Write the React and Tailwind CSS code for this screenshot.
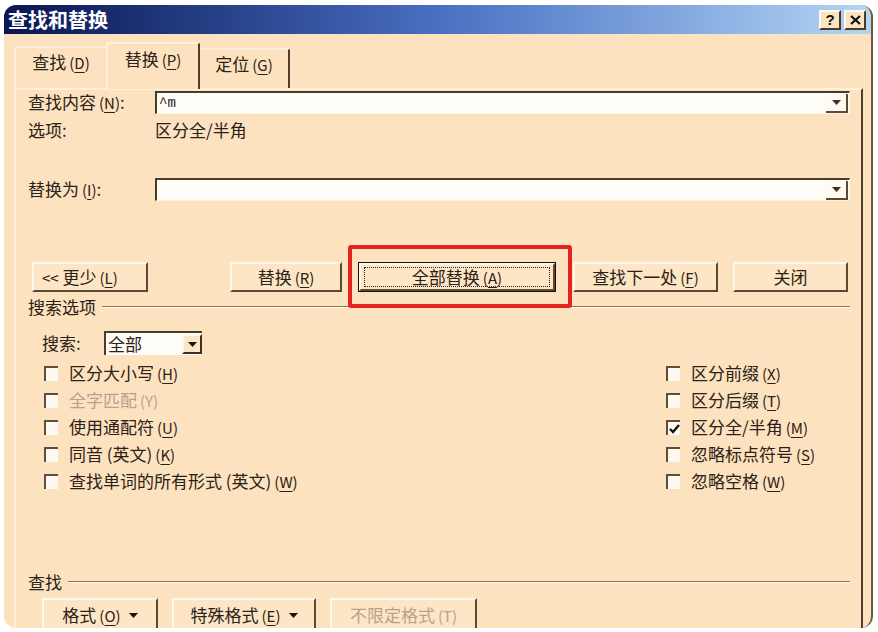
import React from "react";

const ink = "text-[#2b2116]";

function Key({ children }) {
    return <span className="underline underline-offset-[3px] decoration-1">{children}</span>;
}

// mnemonic suffix, e.g. " (N)"
function Mn({ k, plain = false }) {
    return (
        <span className="ml-[3px] text-[15px]">
            ({plain ? k : <Key>{k}</Key>})
        </span>
    );
}

function Btn({ className = "", children }) {
    return (
        <div className={`flex items-center justify-center bg-[#fde6c6] border-2 border-t-[#fff8ec] border-l-[#fff8ec] border-r-[#5b4930] border-b-[#5b4930] ${className}`}>
            {children}
        </div>
    );
}

function DropArrow({ dark = false }) {
    return (
        <svg width="9" height="5" viewBox="0 0 9 5">
            <path d="M0 0 H9 L4.5 5 Z" fill={dark ? "#1a140d" : "#3a2f22"} />
        </svg>
    );
}

function Field({ value }) {
    return (
        <div className="flex-1 h-[23px] flex items-center bg-[#fffdf8] border-t-2 border-l-2 border-b border-r border-t-[#4a3c2a] border-l-[#4a3c2a] border-b-[#fff3e0] border-r-[#fff3e0]">
            <span className="flex-1 pl-[2px] text-[14px] leading-none text-[#1e1810] font-['Liberation_Mono',monospace]">{value}</span>
            <div className="w-[22px] h-[19px] mr-[1px] flex items-center justify-center border-r-2 border-b-2 border-r-[#5b4930] border-b-[#5b4930] bg-[#fffaf2]">
                <DropArrow />
            </div>
        </div>
    );
}

function Check({ checked = false, children, disabled = false }) {
    return (
        <div className="h-[27px] flex items-center">
            <span className="w-[14px] h-[15px] flex items-center justify-center bg-[#fffaf1] border-t-2 border-l-2 border-t-[#5e4f3c] border-l-[#5e4f3c]">
                {checked && (
                    <svg width="11" height="10" viewBox="0 0 11 10">
                        <path d="M1 5 L4 8 L10 1" stroke="#14100a" strokeWidth="2.4" fill="none" />
                    </svg>
                )}
            </span>
            <span className={`ml-[11px] whitespace-nowrap ${disabled ? "text-[#b3a38d]" : ""}`}>{children}</span>
        </div>
    );
}

function Legend({ title }) {
    return (
        <div className="h-[20px] flex items-center">
            <span className="whitespace-nowrap">{title}</span>
            <div className="flex-1 ml-[6px] border-t border-b border-t-[#8b7658] border-b-[#fff6e8]"></div>
        </div>
    );
}

export default function App() {
    return (
        <div className={`w-[878px] h-[632px] bg-white pt-[5px] pl-[4px] pr-[5px] pb-[4px] ${ink} font-['Noto_Sans_CJK_SC',sans-serif] text-[17px] leading-[20px]`}>
            <div className="h-full flex flex-col rounded-[12px] overflow-hidden bg-[#fde2bf] border-r-2 border-r-[#6b5a42]">
                {/* title bar */}
                <div className="h-[29px] shrink-0 flex items-center pl-[4px] pr-[5px] bg-gradient-to-r from-[#0a1652] via-[#4a6fc2] to-[#b4d6f4]">
                    <span className="text-white font-bold text-[20px]">查找和替换</span>
                    <div className="ml-auto flex gap-[3px]">
                        <div className="w-[22px] h-[20px] flex items-center justify-center bg-[#fbe3c4] border-2 border-t-[#fff8ec] border-l-[#fff8ec] border-r-[#4a3a26] border-b-[#4a3a26] font-bold text-[15px] text-[#111] font-['Liberation_Sans',sans-serif]">?</div>
                        <div className="w-[22px] h-[20px] flex items-center justify-center bg-[#fbe3c4] border-2 border-t-[#fff8ec] border-l-[#fff8ec] border-r-[#4a3a26] border-b-[#4a3a26]">
                            <svg width="11" height="10" viewBox="0 0 11 10">
                                <path d="M1 1 L10 9 M10 1 L1 9" stroke="#111" strokeWidth="2.2" />
                            </svg>
                        </div>
                    </div>
                </div>

                {/* tabs */}
                <div className="h-[54px] shrink-0 flex items-end pl-[10px]">
                    <div className="w-[92px] h-[42px] pt-[4px] flex justify-center border-t-2 border-l-2 border-t-[#fff0dc] border-l-[#fff0dc] rounded-tl-[3px]">
                        <span>查找<Mn k="D" /></span>
                    </div>
                    <div className="w-[94px] h-[47px] -mb-[1px] pt-[5px] flex justify-center bg-[#fde2bf] border-t-2 border-l-2 border-r-2 border-t-[#fff0dc] border-l-[#fff0dc] border-r-[#4f3f29] rounded-t-[3px] relative z-10">
                        <span>替换<Mn k="P" /></span>
                    </div>
                    <div className="w-[90px] h-[40px] pt-[4px] flex justify-center border-t-2 border-r-2 border-t-[#fff0dc] border-r-[#4f3f29] rounded-tr-[3px]">
                        <span>定位<Mn k="G" /></span>
                    </div>
                </div>

                {/* panel */}
                <div className="flex-1 ml-[10px] mr-[8px] border-t-2 border-l-2 border-r-2 border-t-[#fff0dc] border-l-[#fff0dc] border-r-[#4f3f29] pl-[12px] pr-[11px] overflow-hidden">
                    <div className="mt-[1px] h-[23px] flex items-center">
                        <span className="w-[127px] whitespace-nowrap">查找内容<Mn k="N" />:</span>
                        <Field value="^m" />
                    </div>
                    <div className="mt-[6px] h-[20px] flex items-center">
                        <span className="w-[127px]">选项:</span>
                        <span>区分全/半角</span>
                    </div>
                    <div className="mt-[38px] h-[23px] flex items-center">
                        <span className="w-[127px] whitespace-nowrap">替换为<Mn k="I" />:</span>
                        <Field value="" />
                    </div>

                    {/* action buttons */}
                    <div className="mt-[61px] h-[30px] flex relative">
                        <Btn className="ml-[4px] w-[116px] !justify-start pl-[8px]">
                            <span><span className="text-[15px]">&lt;&lt;</span> 更少<Mn k="L" /></span>
                        </Btn>
                        <Btn className="ml-[82px] w-[112px]">
                            <span>替换<Mn k="R" /></span>
                        </Btn>
                        <div className="ml-[16px] w-[198px] h-[30px] border border-[#16110a]">
                            <Btn className="h-full w-full">
                                <div className="w-[186px] h-[20px] flex items-center justify-center border border-dotted border-[#2a2218]">
                                    <span>全部替换<Mn k="A" /></span>
                                </div>
                            </Btn>
                        </div>
                        <Btn className="ml-[17px] w-[145px]">
                            <span>查找下一处<Mn k="F" /></span>
                        </Btn>
                        <Btn className="ml-[15px] w-[115px]">
                            <span>关闭</span>
                        </Btn>
                        <div className="absolute left-[320px] -top-[17px] w-[224px] h-[63px] border-4 border-[#e2231f] rounded-[3px]"></div>
                    </div>

                    <div className="mt-[5px]">
                        <Legend title="搜索选项" />
                    </div>

                    <div className="mt-[14px] h-[24px] flex items-center pl-[14px]">
                        <span className="w-[62px]">搜索:</span>
                        <div className="w-[98px] h-[24px] flex items-center bg-[#fffdf8] border-t-2 border-l-2 border-t-[#4a3c2a] border-l-[#4a3c2a]">
                            <span className="flex-1 pl-[2px]">全部</span>
                            <div className="w-[20px] h-[20px] flex items-center justify-center bg-[#fde6c6] border-2 border-t-[#fff8ec] border-l-[#fff8ec] border-r-[#3e3020] border-b-[#3e3020]">
                                <DropArrow dark />
                            </div>
                        </div>
                    </div>

                    <div className="mt-[5px] flex">
                        <div className="pl-[16px] flex flex-col">
                            <Check>区分大小写<Mn k="H" /></Check>
                            <Check disabled>全字匹配<Mn k="Y" plain /></Check>
                            <Check>使用通配符<Mn k="U" /></Check>
                            <Check>同音 (英文)<Mn k="K" /></Check>
                            <Check>查找单词的所有形式 (英文)<Mn k="W" /></Check>
                        </div>
                        <div className="ml-auto w-[184px] flex flex-col">
                            <Check>区分前缀<Mn k="X" /></Check>
                            <Check>区分后缀<Mn k="T" /></Check>
                            <Check checked>区分全/半角<Mn k="M" /></Check>
                            <Check>忽略标点符号<Mn k="S" /></Check>
                            <Check>忽略空格<Mn k="W" /></Check>
                        </div>
                    </div>

                    <div className="mt-[77px]">
                        <Legend title="查找" />
                    </div>

                    <div className="mt-[6px] h-[34px] flex">
                        <Btn className="ml-[14px] w-[116px] gap-[8px]">
                            <span>格式<Mn k="O" /></span>
                            <DropArrow dark />
                        </Btn>
                        <Btn className="ml-[14px] w-[144px] gap-[8px]">
                            <span>特殊格式<Mn k="E" /></span>
                            <DropArrow dark />
                        </Btn>
                        <Btn className="ml-[14px] w-[147px]">
                            <span className="text-[#b3a38d]">不限定格式<Mn k="T" plain /></span>
                        </Btn>
                    </div>
                </div>
            </div>
        </div>
    );
}
